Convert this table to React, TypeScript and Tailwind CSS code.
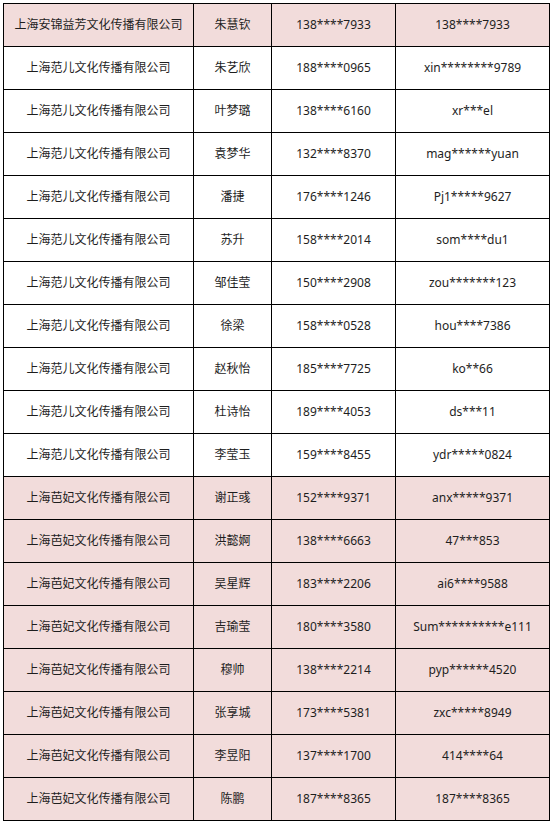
type Row = {
  company: string
  name: string
  phone: string
  account: string
  pink?: boolean
}

const FANER = "上海范儿文化传播有限公司"
const BAFEI = "上海芭妃文化传播有限公司"

const rows: Row[] = [
  { company: "上海安锦益芳文化传播有限公司", name: "朱慧钦", phone: "138****7933", account: "138****7933", pink: true },
  { company: FANER, name: "朱艺欣", phone: "188****0965", account: "xin********9789" },
  { company: FANER, name: "叶梦璐", phone: "138****6160", account: "xr***el" },
  { company: FANER, name: "袁梦华", phone: "132****8370", account: "mag******yuan" },
  { company: FANER, name: "潘捷", phone: "176****1246", account: "Pj1*****9627" },
  { company: FANER, name: "苏升", phone: "158****2014", account: "som****du1" },
  { company: FANER, name: "邹佳莹", phone: "150****2908", account: "zou*******123" },
  { company: FANER, name: "徐梁", phone: "158****0528", account: "hou****7386" },
  { company: FANER, name: "赵秋怡", phone: "185****7725", account: "ko**66" },
  { company: FANER, name: "杜诗怡", phone: "189****4053", account: "ds***11" },
  { company: FANER, name: "李莹玉", phone: "159****8455", account: "ydr*****0824" },
  { company: BAFEI, name: "谢正彧", phone: "152****9371", account: "anx*****9371", pink: true },
  { company: BAFEI, name: "洪懿婀", phone: "138****6663", account: "47***853", pink: true },
  { company: BAFEI, name: "吴星辉", phone: "183****2206", account: "ai6****9588", pink: true },
  { company: BAFEI, name: "吉瑜莹", phone: "180****3580", account: "Sum**********e111", pink: true },
  { company: BAFEI, name: "穆帅", phone: "138****2214", account: "pyp******4520", pink: true },
  { company: BAFEI, name: "张享城", phone: "173****5381", account: "zxc*****8949", pink: true },
  { company: BAFEI, name: "李昱阳", phone: "137****1700", account: "414****64", pink: true },
  { company: BAFEI, name: "陈鹏", phone: "187****8365", account: "187****8365", pink: true },
]

export default function App() {
  return (
    <div className="w-[553px] h-[824px] bg-white pt-[3px] pl-[3px] font-['Noto_Sans','Noto_Sans_CJK_SC',sans-serif] text-[12px] text-[#1e1e1e]">
      <table className="border-collapse table-fixed w-[546px]">
        <colgroup>
          <col className="w-[190px]" />
          <col className="w-[78px]" />
          <col className="w-[124px]" />
          <col className="w-[154px]" />
        </colgroup>
        <tbody>
          {rows.map((r, i) => (
            <tr key={i} className={r.pink ? "bg-[#f2dcdb]" : "bg-white"}>
              <td className="h-[43px] border border-black text-center p-0">{r.company}</td>
              <td className="h-[43px] border border-black text-center p-0">{r.name}</td>
              <td className="h-[43px] border border-black text-center p-0">{r.phone}</td>
              <td className="h-[43px] border border-black text-center p-0">{r.account}</td>
            </tr>
          ))}
        </tbody>
      </table>
    </div>
  )
}
